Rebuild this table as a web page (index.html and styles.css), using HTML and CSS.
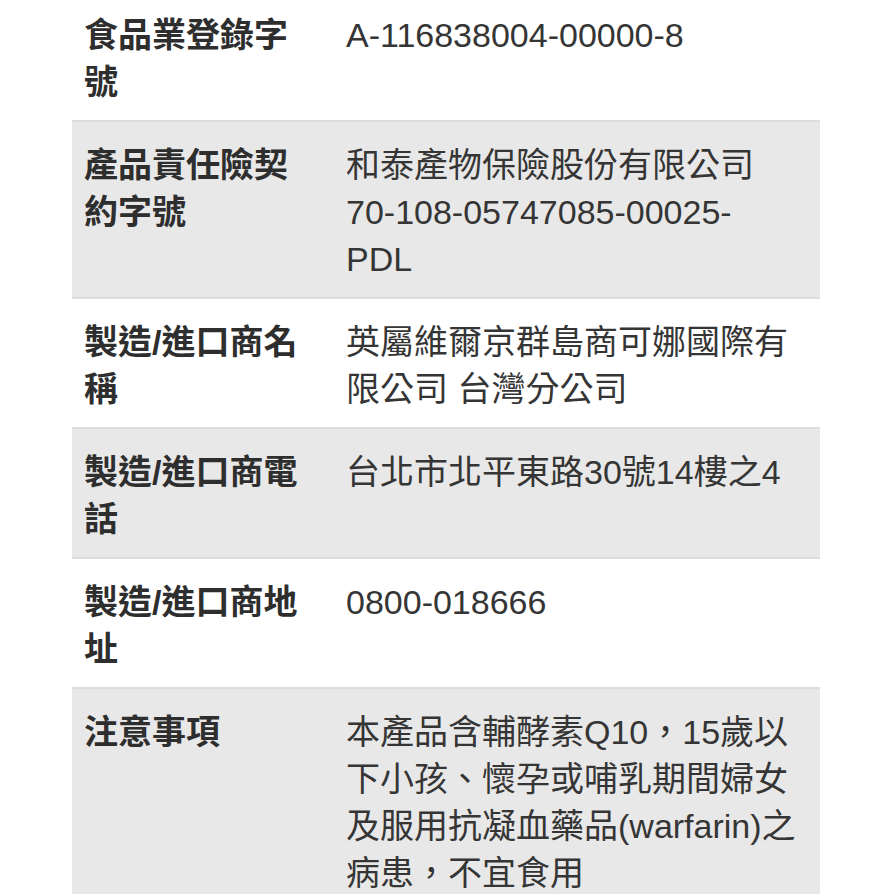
FILE: index.html
```html
<!DOCTYPE html>
<html lang="zh-Hant">
<head>
<meta charset="utf-8">
<title>產品資訊</title>
<link rel="stylesheet" href="styles.css">
</head>
<body>
<div class="spec">
  <div class="row">
    <div class="label">食品業登錄字號</div>
    <div class="value">A-116838004-00000-8</div>
  </div>
  <div class="row">
    <div class="label">產品責任險契約字號</div>
    <div class="value">和泰產物保險股份有限公司<br>70-108-05747085-00025-<br>PDL</div>
  </div>
  <div class="row">
    <div class="label">製造/進口商名稱</div>
    <div class="value">英屬維爾京群島商可娜國際有限公司 台灣分公司</div>
  </div>
  <div class="row">
    <div class="label">製造/進口商電話</div>
    <div class="value">台北市北平東路30號14樓之4</div>
  </div>
  <div class="row">
    <div class="label">製造/進口商地址</div>
    <div class="value">0800-018666</div>
  </div>
  <div class="row">
    <div class="label">注意事項</div>
    <div class="value">本產品含輔酵素Q10，15歲以下小孩、懷孕或哺乳期間婦女及服用抗凝血藥品(warfarin)之病患，不宜食用</div>
  </div>
</div>
</body>
</html>
```

FILE: styles.css
```css
html, body {
  margin: 0;
  padding: 0;
  background: #ffffff;
}

body {
  font-family: "Liberation Sans", "Noto Sans CJK TC", sans-serif;
  font-size: 34px;
  line-height: 47px;
  color: #333333;
}

.spec {
  width: 748px;
  margin: -8px 0 0 72px;
}

.row {
  display: grid;
  grid-template-columns: 262px 1fr;
  border-bottom: 2px solid #dddddd;
}

.row:nth-child(even) {
  background: #e8e8e8;
}

.label {
  padding: 20px 25px 14px 12px;
  font-weight: 700;
  color: #2e2e2e;
}

.value {
  padding: 20px 14px 14px 12px;
  color: #353535;
}
```
